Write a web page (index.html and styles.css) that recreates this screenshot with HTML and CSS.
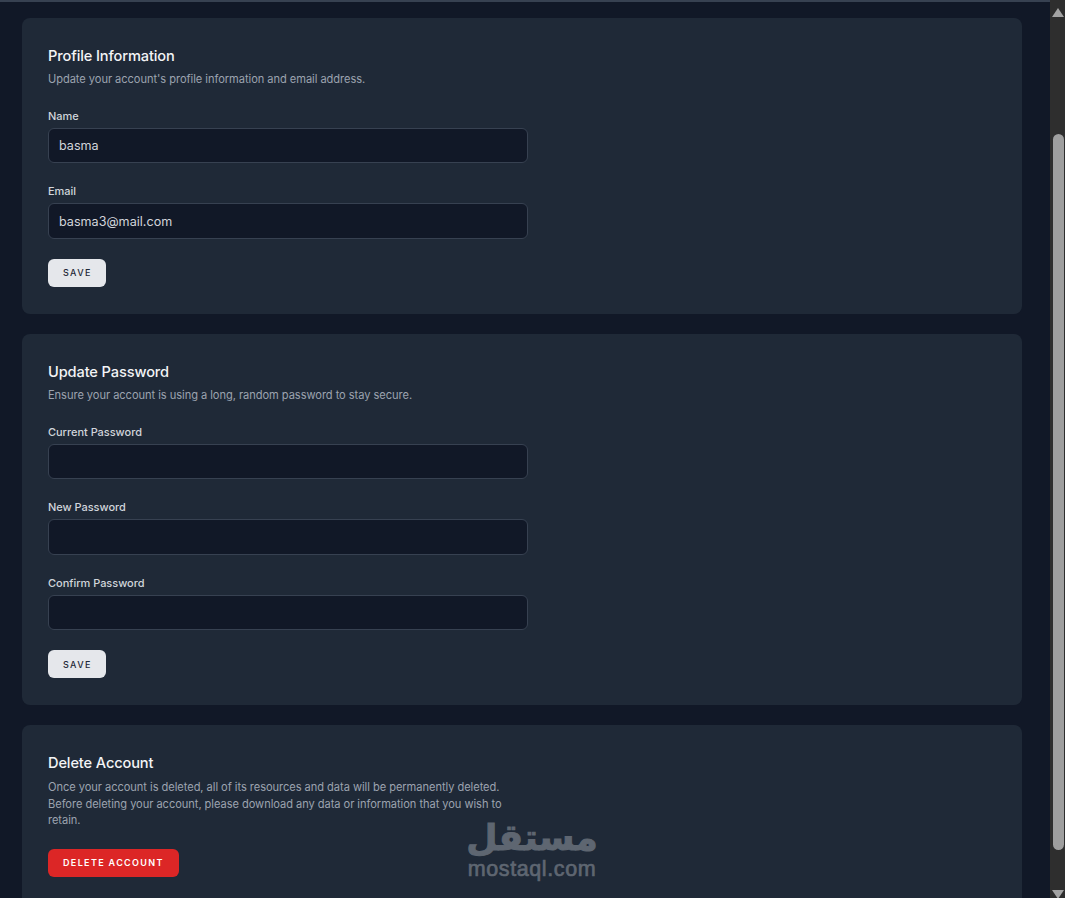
FILE: index.html
```html
<!DOCTYPE html>
<html lang="en">
<head>
  <meta charset="UTF-8" />
  <meta name="viewport" content="width=device-width, initial-scale=1" />
  <title>Profile</title>
  <link rel="stylesheet" href="styles.css">
</head>
<body>

  <div class="topline"></div>

  <div class="window">
    <main class="content">

      <section class="card card-profile">
        <h2>Profile Information</h2>
        <p class="desc">Update your account's profile information and email address.</p>

        <div class="field">
          <label for="name">Name</label>
          <input id="name" type="text" value="basma">
        </div>
        <div class="field">
          <label for="email">Email</label>
          <input id="email" type="text" value="basma3@mail.com">
        </div>

        <button class="btn">SAVE</button>
      </section>

      <section class="card card-password">
        <h2>Update Password</h2>
        <p class="desc">Ensure your account is using a long, random password to stay secure.</p>

        <div class="field">
          <label for="current">Current Password</label>
          <input id="current" type="password">
        </div>
        <div class="field">
          <label for="new">New Password</label>
          <input id="new" type="password">
        </div>
        <div class="field">
          <label for="confirm">Confirm Password</label>
          <input id="confirm" type="password">
        </div>

        <button class="btn">SAVE</button>
      </section>

      <section class="card card-delete">
        <h2>Delete Account</h2>
        <p class="desc desc-wide">Once your account is deleted, all of its resources and data will be permanently deleted. Before deleting your account, please download any data or information that you wish to retain.</p>
        <button class="btn btn-danger">DELETE ACCOUNT</button>
      </section>

    </main>

    <!-- scrollbar -->
    <div class="scrollbar">
      <div class="arrow arrow-up"></div>
      <div class="thumb"></div>
      <div class="arrow arrow-down"></div>
    </div>
  </div>

  <!-- watermark -->
  <div class="watermark">
    <div class="wm-arabic" lang="ar" dir="rtl">مستقل</div>
    <div class="wm-latin">mostaql.com</div>
  </div>

</body>
</html>
```

FILE: styles.css
```css
html, body {
  height: 100%;
}

body {
  margin: 0;
  background: #111827;
  font-family: 'Inter', 'Liberation Sans', sans-serif;
  color: #f3f4f6;
  overflow: hidden;
  position: relative;
}

.topline {
  height: 2px;
  background: #374151;
}

.window {
  display: flex;
  height: 896px;
}

.content {
  flex: 1;
  padding: 16px 28px 0 22px;
  display: flex;
  flex-direction: column;
  gap: 20px;
  overflow: hidden;
}

.card {
  flex: none;
  background: #1f2937;
  border-radius: 8px;
  padding: 26px 26px 0;
  box-sizing: border-box;
}

.card-profile { height: 296px; }
.card-password { height: 371px; }
.card-delete { height: 240px; }

h2 {
  margin: 0;
  font-size: 14.6px;
  font-weight: 500;
  line-height: 24px;
  letter-spacing: -0.12px;
  color: #f3f4f6;
}

.desc {
  margin: 1px 0 0;
  font-size: 11.1px;
  line-height: 20px;
  color: #9ca3af;
  letter-spacing: -0.05px;
}

.desc-wide {
  width: 470px;
  margin-top: 4px;
  line-height: 16.5px;
}

.field {
  margin-top: 18px;
  width: 480px;
}

.desc + .field {
  margin-top: 16.6px;
}

label {
  display: block;
  font-size: 11px;
  font-weight: 500;
  line-height: 20px;
  letter-spacing: -0.03px;
  color: #d1d5db;
}

input {
  display: block;
  width: 100%;
  height: 35.5px;
  margin-top: 2px;
  box-sizing: border-box;
  background: #111827;
  border: 1px solid #374151;
  border-radius: 6px;
  padding: 1px 10px 0;
  font-family: inherit;
  font-size: 12.6px;
  color: #d1d5db;
}

.btn {
  display: block;
  height: 28px;
  margin-top: 20px;
  padding: 0 14px 0 15px;
  background: #e5e7eb;
  border: none;
  border-radius: 6px;
  font-family: inherit;
  font-size: 9px;
  font-weight: 500;
  letter-spacing: 1.35px;
  color: #1f2937;
}

.btn-danger {
  margin-top: 20px;
  padding: 0 15px;
  background: #dc2626;
  font-weight: 600;
  color: #fff;
}

.scrollbar {
  flex: none;
  width: 15px;
  background: #2e2e2e;
  margin-top: -2px;
  height: 898px;
  position: relative;
}

.thumb {
  position: absolute;
  top: 134px;
  left: 3px;
  width: 11px;
  height: 716px;
  border-radius: 6px;
  background: #9f9f9f;
}

.arrow {
  position: absolute;
  left: 2px;
  width: 0;
  height: 0;
  border-left: 6px solid transparent;
  border-right: 6px solid transparent;
}

.arrow-up {
  top: 8px;
  border-bottom: 9px solid #a3a3a3;
}

.arrow-down {
  top: 890px;
  border-top: 9px solid #a3a3a3;
}

.watermark {
  position: absolute;
  left: 462px;
  top: 819px;
  width: 140px;
  text-align: center;
  color: #5e6671;
  pointer-events: none;
}

.wm-arabic {
  font-family: 'DejaVu Sans', sans-serif;
  font-size: 36px;
  font-weight: 700;
  line-height: 38px;
  -webkit-text-stroke: 1px #5e6671;
}

.wm-latin {
  margin-top: 2px;
  font-family: 'Liberation Sans', sans-serif;
  font-size: 21.5px;
  line-height: 20px;
  letter-spacing: 0.6px;
  -webkit-text-stroke: 0.7px #5e6671;
}
```
